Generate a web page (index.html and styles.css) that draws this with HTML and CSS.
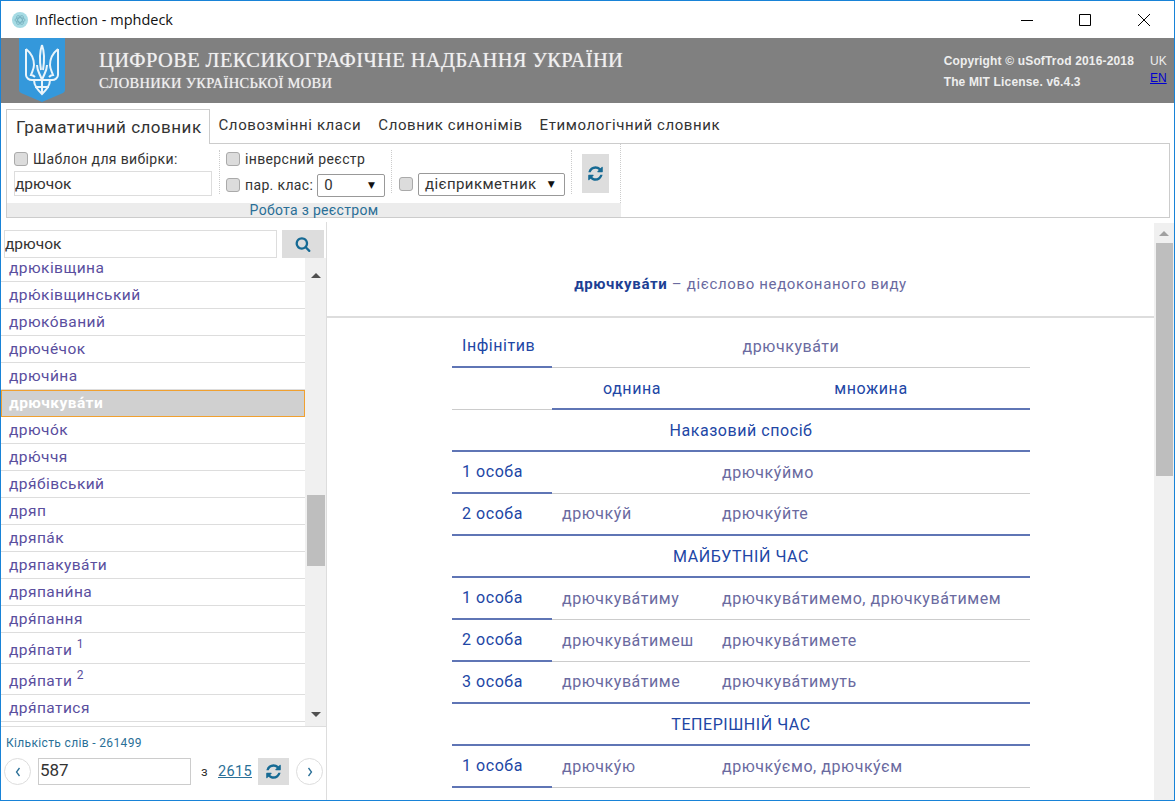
FILE: index.html
```html
<!DOCTYPE html>
<html lang="uk">
<head>
    <meta charset="UTF-8">
    <meta name="viewport" content="width=device-width, initial-scale=1.0">
    <title>Inflection - mphdeck</title>
    <link rel="stylesheet" href="styles.css">
</head>
<body>
<div class="window">
    <div class="titlebar">
        <svg class="app-icon" width="16" height="16" viewBox="0 0 16 16">
            <circle cx="8" cy="8" r="8" fill="#a6dbe4"/>
            <g fill="none" stroke="#6fa9b8" stroke-width="0.7">
                <ellipse cx="8" cy="8" rx="5" ry="2.2"/>
                <ellipse cx="8" cy="8" rx="5" ry="2.2" transform="rotate(60 8 8)"/>
                <ellipse cx="8" cy="8" rx="5" ry="2.2" transform="rotate(120 8 8)"/>
            </g>
        </svg>
        <span class="app-title">Inflection - mphdeck</span>
        <div class="win-buttons">
            <svg width="14" height="14" viewBox="0 0 14 14"><path d="M1 7.5h12" stroke="#000" fill="none"/></svg>
            <svg width="14" height="14" viewBox="0 0 14 14"><path d="M1.5 1.5h11v11h-11z" stroke="#000" fill="none"/></svg>
            <svg class="win-close" width="14" height="14" viewBox="0 0 14 14"><path d="M1 1l12 12M13 1L1 13" stroke="#000" fill="none"/></svg>
        </div>
    </div>

    <header class="header">
        <svg class="shield" width="46" height="64" viewBox="0 0 46 64">
            <path d="M0 0h46v52q0 2-2 3L23 64 2 55q-2-1-2-3z" fill="#3498db"/>
            <g fill="none" stroke="#eaf5fb" stroke-width="2">
                <path d="M23 7c-2.500 7-2.500 16-1 25M23 7c2.500 7 2.500 16 1 25"/>
                <path d="M7 11v26c0 3 3 5 6 5h20c3 0 6-2 6-5V11"/>
                <path d="M7 11c5 4 8 10 8 16 0 4-2 7-3 10 2 0 3 1 4 2M39 11c-5 4-8 10-8 16 0 4 2 7 3 10-2 0-3 1-4 2"/>
                <path d="M18 27c0 6 3 9 5 15 2-6 5-9 5-15"/>
                <path d="M15 42c0 6 4 10 8 14 4-4 8-8 8-14M23 42v14M16 49h14"/>
            </g>
        </svg>
        <div class="site-title">
            <div class="site-name">ЦИФРОВЕ ЛЕКСИКОГРАФІЧНЕ НАДБАННЯ УКРАЇНИ</div>
            <div class="site-sub">СЛОВНИКИ УКРАЇНСЬКОЇ МОВИ</div>
        </div>
        <div class="copyright">
            <div>Copyright © uSofTrod 2016-2018</div>
            <div>The MIT License. v6.4.3</div>
        </div>
        <div class="langs">
            <div>UK</div>
            <a href="#">EN</a>
        </div>
    </header>

    <nav class="tabs">
        <a class="tab active" href="#">Граматичний словник</a>
        <a class="tab" href="#">Словозмінні класи</a>
        <a class="tab" href="#">Словник синонімів</a>
        <a class="tab" href="#">Етимологічний словник</a>
    </nav>

    <section class="panel">
        <div class="panel-left">
            <div class="controls">
                <div class="group group-pattern">
                    <label class="check"><input type="checkbox">Шаблон для вибірки:</label>
                    <input class="pattern-input" type="text" value="дрючок">
                </div>
                <div class="group group-class">
                    <label class="check"><input type="checkbox">інверсний реєстр</label>
                    <div class="check">
                        <input type="checkbox">пар. клас:
                        <div class="select select-num">0<span class="arrow">▼</span></div>
                    </div>
                </div>
                <div class="group group-part">
                    <div class="check">
                        <input type="checkbox">
                        <div class="select select-part">дієприкметник<span class="arrow">▼</span></div>
                    </div>
                </div>
                <div class="group-btn">
                    <button class="icon-btn refresh-big">
                        <svg width="17" height="17" viewBox="0 0 1792 1792"><path d="M1639 1056q0 5-1 7-64 268-268 434.5t-478 166.5q-146 0-282.5-55t-243.5-157l-129 129q-19 19-45 19t-45-19-19-45v-448q0-26 19-45t45-19h448q26 0 45 19t19 45-19 45l-137 137q71 66 161 102t187 36q134 0 250-65t186-179q11-17 53-117 8-23 30-23h192q13 0 22.5 9.5t9.5 22.5zm25-800v448q0 26-19 45t-45 19h-448q-26 0-45-19t-19-45 19-45l138-138q-148-137-349-137-134 0-250 65t-186 179q-11 17-53 117-8 23-30 23h-199q-13 0-22.5-9.5t-9.5-22.5v-7q65-268 270-434.5t480-166.5q146 0 284 55.5t245 156.5l130-129q19-19 45-19t45 19 19 45z"/></svg>
                    </button>
                </div>
            </div>
            <div class="panel-caption">Робота з реєстром</div>
        </div>
    </section>

    <main class="main">
        <aside class="sidebar">
            <div class="search">
                <input class="search-input" type="text" value="дрючок">
                <button class="icon-btn search-btn">
                    <svg width="16" height="16" viewBox="0 0 1792 1792"><path d="M1216 832q0-185-131.5-316.5t-316.5-131.5-316.5 131.5-131.5 316.5 131.5 316.5 316.5 131.5 316.5-131.5 131.5-316.5zm512 832q0 52-38 90t-90 38q-54 0-90-38l-343-342q-179 124-399 124-143 0-273.5-55.5t-225-150-150-225-55.5-273.5 55.5-273.5 150-225 225-150 273.5-55.5 273.5 55.5 225 150 150 225 55.5 273.5q0 220-124 399l343 343q37 37 37 90z"/></svg>
                </button>
            </div>
            <div class="list-wrap">
                <ul class="words">
                    <li>дрюківщина</li>
                    <li>дрю́ківщинський</li>
                    <li>дрюко́ваний</li>
                    <li>дрюче́чок</li>
                    <li>дрючи́на</li>
                    <li class="selected">дрючкува́ти</li>
                    <li>дрючо́к</li>
                    <li>дрю́ччя</li>
                    <li>дря́бівський</li>
                    <li>дряп</li>
                    <li>дряпа́к</li>
                    <li>дряпакува́ти</li>
                    <li>дряпани́на</li>
                    <li>дря́пання</li>
                    <li class="tall">дря́пати <sup>1</sup></li>
                    <li class="tall">дря́пати <sup>2</sup></li>
                    <li>дря́патися</li>
                </ul>
                <div class="scrollbar list-scroll">
                    <span class="sb-up"></span>
                    <span class="sb-thumb"></span>
                    <span class="sb-down"></span>
                </div>
            </div>
            <div class="side-footer">
                <div class="count">Кількість слів - 261499</div>
                <div class="pager">
                    <span class="round-btn"><svg width="8" height="10" viewBox="0 0 8 10"><path d="M5.500 1L2.500 5l3 4" fill="none" stroke="#2a6f97" stroke-width="1.300"/></svg></span>
                    <input class="page-input" type="text" value="587">
                    <span class="page-of">з</span>
                    <a class="page-total" href="#">2615</a>
                    <button class="icon-btn refresh-small">
                        <svg width="17" height="17" viewBox="0 0 1792 1792"><path d="M1639 1056q0 5-1 7-64 268-268 434.5t-478 166.5q-146 0-282.5-55t-243.5-157l-129 129q-19 19-45 19t-45-19-19-45v-448q0-26 19-45t45-19h448q26 0 45 19t19 45-19 45l-137 137q71 66 161 102t187 36q134 0 250-65t186-179q11-17 53-117 8-23 30-23h192q13 0 22.5 9.5t9.5 22.5zm25-800v448q0 26-19 45t-45 19h-448q-26 0-45-19t-19-45 19-45l138-138q-148-137-349-137-134 0-250 65t-186 179q-11 17-53 117-8 23-30 23h-199q-13 0-22.5-9.5t-9.5-22.5v-7q65-268 270-434.5t480-166.5q146 0 284 55.5t245 156.5l130-129q19-19 45-19t45 19 19 45z"/></svg>
                    </button>
                    <span class="round-btn"><svg width="8" height="10" viewBox="0 0 8 10"><path d="M2.500 1l3 4-3 4" fill="none" stroke="#2a6f97" stroke-width="1.300"/></svg></span>
                </div>
            </div>
        </aside>

        <section class="content">
            <div class="article">
                <h2 class="word-head"><b>дрючкува́ти</b> – дієслово недоконаного виду</h2>
                <table class="forms">
                    <colgroup>
                        <col class="col-label">
                        <col class="col-one">
                        <col class="col-many">
                    </colgroup>
                    <tr>
                        <td class="label">Інфінітив</td>
                        <td class="val center" colspan="2">дрючкува́ти</td>
                    </tr>
                    <tr>
                        <td></td>
                        <td class="head strong">однина</td>
                        <td class="head strong">множина</td>
                    </tr>
                    <tr class="section"><td class="head" colspan="3">Наказовий спосіб</td></tr>
                    <tr>
                        <td class="label">1 особа</td>
                        <td class="val"></td>
                        <td class="val">дрючку́ймо</td>
                    </tr>
                    <tr class="last">
                        <td class="label">2 особа</td>
                        <td class="val">дрючку́й</td>
                        <td class="val">дрючку́йте</td>
                    </tr>
                    <tr class="section"><td class="head" colspan="3">МАЙБУТНІЙ ЧАС</td></tr>
                    <tr>
                        <td class="label">1 особа</td>
                        <td class="val">дрючкува́тиму</td>
                        <td class="val">дрючкува́тимемо, дрючкува́тимем</td>
                    </tr>
                    <tr>
                        <td class="label">2 особа</td>
                        <td class="val">дрючкува́тимеш</td>
                        <td class="val">дрючкува́тимете</td>
                    </tr>
                    <tr class="last">
                        <td class="label">3 особа</td>
                        <td class="val">дрючкува́тиме</td>
                        <td class="val">дрючкува́тимуть</td>
                    </tr>
                    <tr class="section"><td class="head" colspan="3">ТЕПЕРІШНІЙ ЧАС</td></tr>
                    <tr>
                        <td class="label">1 особа</td>
                        <td class="val">дрючку́ю</td>
                        <td class="val">дрючку́ємо, дрючку́єм</td>
                    </tr>
                </table>
            </div>
            <div class="scrollbar page-scroll">
                <span class="sb-up"></span>
                <span class="sb-thumb"></span>
            </div>
        </section>
    </main>
</div>
</body>
</html>
```

FILE: styles.css
```css
* {
    box-sizing: border-box;
}
html, body {
    margin: 0;
    height: 100%;
    overflow: hidden;
}
body {
    background: #fff;
    font-family: Roboto, "Open Sans", sans-serif;
    color: #333;
}
.window {
    width: 1175px;
    height: 801px;
    border: 1px solid #1883d7;
    display: flex;
    flex-direction: column;
    overflow: hidden;
    background: #fff;
}

/* title bar */
.titlebar {
    height: 37px;
    flex: none;
    display: flex;
    align-items: center;
    padding-left: 11px;
    font-family: "Open Sans", sans-serif;
    font-size: 14.5px;
    color: #111;
}
.app-icon {
    flex: none;
    margin-right: 7px;
}
.win-buttons {
    margin-left: auto;
    display: flex;
    gap: 44px;
    padding-right: 23px;
}
.win-close {
    margin-left: 1px;
}

/* grey header */
.header {
    height: 65px;
    flex: none;
    background: #808080;
    color: #f0f0f0;
    display: flex;
    padding-left: 18px;
}
.shield {
    flex: none;
}
.site-title {
    font-family: "Liberation Serif", serif;
    margin-left: 34px;
    padding-top: 9px;
    text-shadow: 0 0 1px rgba(255, 255, 255, 0.6);
}
.site-name {
    font-size: 20.5px;
    line-height: 26px;
    letter-spacing: 0.38px;
}
.site-sub {
    font-size: 14.5px;
    line-height: 20px;
    letter-spacing: 0.3px;
}
.copyright {
    margin-left: auto;
    font-family: "Liberation Sans", sans-serif;
    font-size: 12px;
    font-weight: bold;
    letter-spacing: 0.16px;
    line-height: 21px;
    padding-top: 13px;
    color: #eee;
}
.langs {
    width: 24px;
    margin-left: 16px;
    padding-top: 13px;
    font-family: "Liberation Sans", sans-serif;
    font-size: 12px;
    line-height: 20px;
    color: #eee;
}
.langs a {
    color: #0000d0;
    display: block;
    line-height: 14px;
}

/* tabs */
.tabs {
    flex: none;
    display: flex;
    align-items: flex-start;
    margin-top: 6px;
    padding-left: 5px;
    height: 35px;
    margin-bottom: -1px;
    position: relative;
    z-index: 1;
}
.tab {
    color: #333;
    text-decoration: none;
    font-size: 15px;
    letter-spacing: 0.6px;
    line-height: 32px;
    padding: 0 8.5px;
}
.tab.active {
    height: 35px;
    line-height: 35px;
    font-size: 17px;
    letter-spacing: 0.5px;
    background: #fff;
    border: 1px solid #ccc;
    border-bottom: none;
    width: 204px;
    padding: 0 0 0 9px;
    white-space: nowrap;
}

/* filter panel */
.panel {
    flex: none;
    height: 75px;
    margin: 0 4px 0 5px;
    border: 1px solid #ccc;
}
.panel-left {
    width: 614px;
    height: 100%;
    display: flex;
    flex-direction: column;
}
.controls {
    flex: 1;
    display: flex;
    padding-top: 6px;
    border-right: 1px dotted #ccc;
}
.group {
    height: 45px;
    display: flex;
    flex-direction: column;
    justify-content: space-between;
    font-size: 14px;
    letter-spacing: 0.35px;
}
.group-pattern {
    width: 212px;
    padding-left: 7px;
    height: 46px;
}
.group-class {
    width: 172px;
    height: 44px;
    padding-left: 6px;
    border-left: 1px dotted #ccc;
}
.group-part {
    width: 180px;
    height: 43px;
    padding-left: 7px;
    border-left: 1px dotted #ccc;
    justify-content: flex-end;
}
.group-btn {
    flex: 1;
    padding-left: 10px;
    border-left: 1px dotted #ccc;
    height: 44px;
}
.check {
    display: flex;
    align-items: center;
    height: 18px;
    white-space: nowrap;
}
.check input {
    appearance: none;
    width: 14px;
    height: 14px;
    margin: 0 5px 0 0;
    background: #dcdcdc;
    border: 1px solid #aaa;
    border-radius: 3px;
}
.pattern-input {
    width: 198px;
    height: 25px;
    border: 1px solid #ddd;
    font: 15.5px Roboto, sans-serif;
    color: #333;
    padding: 0;
    outline: none;
}
.select {
    height: 23px;
    border: 1px solid #999;
    border-radius: 2px;
    display: flex;
    align-items: center;
    justify-content: space-between;
    padding: 0 9px 0 6px;
    font-size: 15px;
    color: #333;
    letter-spacing: 0.4px;
}
.arrow {
    font-size: 9px;
    color: #111;
    font-family: "DejaVu Sans", sans-serif;
}
.select-num {
    width: 68px;
    margin-left: 4px;
}
.select-part {
    width: 147px;
}
.panel-caption {
    flex: none;
    height: 14px;
    background: #ececec;
    text-align: center;
    font-size: 14px;
    line-height: 14px;
    color: #2a6f97;
    letter-spacing: 0.3px;
}
.icon-btn {
    border: none;
    padding: 0;
    background: #ddd;
    display: flex;
    align-items: center;
    justify-content: center;
}
.icon-btn svg {
    fill: #166a94;
}
.refresh-big {
    width: 27px;
    height: 39px;
    margin-top: 4px;
}

/* main area */
.main {
    flex: 1;
    min-height: 0;
    display: flex;
    margin-top: 4px;
}
.sidebar {
    flex: none;
    width: 326px;
    border-right: 1px solid #ddd;
    display: flex;
    flex-direction: column;
}
.search {
    flex: none;
    display: flex;
    padding: 8px 1px 0 3px;
    gap: 5px;
}
.search-input {
    width: 273px;
    height: 28px;
    border: 1px solid #ddd;
    font: 15.5px Roboto, sans-serif;
    color: #333;
    padding: 0;
    outline: none;
}
.search-btn {
    width: 42px;
    height: 28px;
}
.list-wrap {
    height: 469px;
    flex: none;
    display: flex;
    overflow: hidden;
    border-bottom: 1px solid #ddd;
}
.words {
    list-style: none;
    margin: -3px 0 0;
    padding: 0;
    width: 304px;
    flex: none;
}
.words li {
    height: 27px;
    line-height: 26px;
    padding-left: 8px;
    border-bottom: 1px solid #ddd;
    font-size: 15.5px;
    letter-spacing: 0.45px;
    color: #5a4e9e;
}
.words li.tall {
    height: 31px;
    line-height: 34px;
}
.words sup {
    font-size: 12px;
    line-height: 0;
    vertical-align: 7px;
}
.words li.selected {
    background: #d0d0d0;
    color: #fff;
    font-weight: bold;
    border: 1px solid #f0a030;
    line-height: 25px;
    padding-left: 7px;
}
.scrollbar {
    flex: none;
    display: flex;
    flex-direction: column;
    align-items: center;
    background: #f0f0f0;
}
.list-scroll {
    width: 21px;
}
.list-scroll .sb-thumb {
    width: 18px;
    height: 71px;
    margin-top: 217px;
}
.sb-thumb {
    display: block;
    background: #bebebe;
    flex: none;
}
.sb-up, .sb-down {
    display: block;
    width: 0;
    height: 0;
    border-left: 5px solid transparent;
    border-right: 5px solid transparent;
}
.sb-up {
    border-bottom: 5px solid #505050;
    margin-top: 15px;
}
.sb-down {
    border-top: 5px solid #505050;
    margin-top: 146px;
}
.side-footer {
    flex: 1;
    padding: 9px 3px 0;
}
.count {
    font-size: 12px;
    letter-spacing: 0.35px;
    line-height: 15px;
    color: #2a6f97;
    padding-left: 2px;
}
.pager {
    display: flex;
    align-items: center;
    margin-top: 7px;
}
.round-btn {
    flex: none;
    width: 27px;
    height: 27px;
    border: 1px solid #ddd;
    border-radius: 50%;
    display: flex;
    align-items: center;
    justify-content: center;
}
.page-input {
    width: 153px;
    height: 27px;
    margin-left: 7px;
    border: 1px solid #ccc;
    font: 17px Roboto, sans-serif;
    color: #333;
    padding: 0 0 3px 1px;
    outline: none;
}
.page-of {
    font-size: 13px;
    margin-left: 10px;
    width: 17px;
}
.page-total {
    font-size: 14.5px;
    letter-spacing: 0.35px;
    color: #2a6f97;
    width: 40px;
}
.refresh-small {
    width: 31px;
    height: 27px;
}
.pager .round-btn:last-child {
    margin-left: 7px;
}

/* word forms */
.content {
    flex: 1;
    min-width: 0;
    display: flex;
    overflow: hidden;
}
.article {
    flex: 1;
    min-width: 0;
}
.word-head {
    margin: 0;
    height: 96px;
    padding-top: 52px;
    border-bottom: 2px solid #ddd;
    text-align: center;
    font-size: 15px;
    font-weight: normal;
    letter-spacing: 0.65px;
    line-height: 21px;
    color: #6a6a9f;
}
.word-head b {
    color: #1d3f94;
}
.forms {
    width: 578px;
    margin: 8px 0 0 125px;
    border-collapse: separate;
    border-spacing: 0;
    table-layout: fixed;
    font-size: 16px;
    letter-spacing: 0.55px;
}
.col-label {
    width: 100px;
}
.col-one {
    width: 160px;
}
.forms td {
    height: 42px;
    padding: 0 0 1px 10px;
    border-bottom: 1px solid #ccc;
    white-space: nowrap;
}
.label {
    color: #2146a5;
}
.val {
    color: #6a6a9f;
}
.forms td.center {
    text-align: center;
    padding: 0 0 1px;
}
.forms td.head {
    color: #2146a5;
    text-align: center;
    padding: 0;
}
.forms td.label, .forms td.strong, .forms .section td, .forms .last td {
    border-bottom: 2px solid #5f75b5;
}
.page-scroll {
    width: 20px;
    margin-top: 1px;
}
.page-scroll .sb-up {
    border-bottom-color: #a0a0a0;
    margin-top: 8px;
}
.page-scroll .sb-thumb {
    width: 17px;
    height: 233px;
    margin-top: 7px;
}
```
